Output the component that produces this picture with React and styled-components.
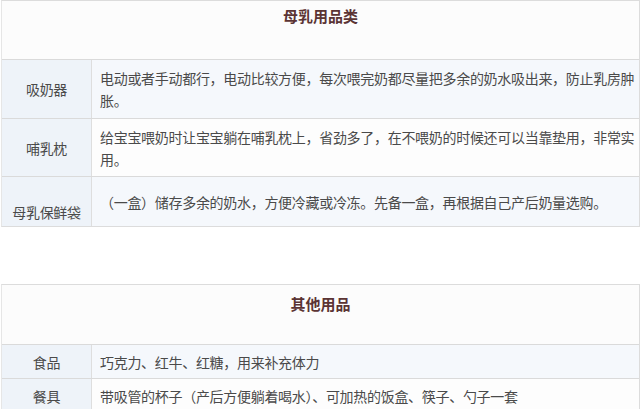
import React from 'react';
import styled, { createGlobalStyle } from 'styled-components';

const GlobalStyle = createGlobalStyle`
  body {
    margin: 0;
    background: #ffffff;
    font-family: "Noto Sans CJK SC", "Noto Sans", sans-serif;
  }
`;

export const Page = styled.div`
  width: 640px;
  height: 409px;
  overflow: hidden;
  display: flex;
  flex-direction: column;
  gap: 57px;
`;

export const Table = styled.div`
  margin-left: 1px;
  width: 639px;
  box-sizing: border-box;
  border: 1px solid #dcdcdc;
  border-left-color: #e6e6e6;
`;

export const Header = styled.div`
  height: ${p => p.h}px;
  box-sizing: border-box;
  padding-top: ${p => p.pt}px;
  background: #fcfcfc;
  text-align: center;
  font-size: 15px;
  line-height: 22px;
  font-weight: bold;
  color: #5b3434;
`;

export const Row = styled.div`
  display: grid;
  grid-template-columns: 90px 1fr;
  height: ${p => p.h}px;
  box-sizing: border-box;
  border-top: 1px solid #dadada;
`;

export const Label = styled.div`
  display: flex;
  align-items: center;
  justify-content: center;
  padding-top: ${p => p.drop || 0}px;
  background: #eef3f9;
  border-right: 1px solid #dedede;
  font-size: 14px;
  letter-spacing: -0.3px;
  line-height: 22px;
  color: #4a4a4a;
`;

export const Cell = styled.div`
  display: flex;
  align-items: center;
  padding: 0 2px 0 8px;
  background: ${p => (p.alt ? '#f5f8fc' : '#fdfdfd')};
  font-size: 14px;
  letter-spacing: -0.3px;
  line-height: 22px;
  color: #4a4a4a;
`;

const feeding = [
  { name: '吸奶器', h: 59, text: '电动或者手动都行，电动比较方便，每次喂完奶都尽量把多余的奶水吸出来，防止乳房肿胀。' },
  { name: '哺乳枕', h: 58, text: '给宝宝喂奶时让宝宝躺在哺乳枕上，省劲多了，在不喂奶的时候还可以当靠垫用，非常实用。' },
  { name: '母乳保鲜袋', h: 50, drop: 20, text: '（一盒）储存多余的奶水，方便冷藏或冷冻。先备一盒，再根据自己产后奶量选购。' },
];

const others = [
  { name: '食品', h: 34, text: '巧克力、红牛、红糖，用来补充体力' },
  { name: '餐具', h: 34, text: '带吸管的杯子（产后方便躺着喝水）、可加热的饭盒、筷子、勺子一套' },
];

function Section({ title, headH, headPt, rows }) {
  return (
    <Table>
      <Header h={headH} pt={headPt}>{title}</Header>
      {rows.map((r, i) => (
        <Row key={r.name} h={r.h}>
          <Label drop={r.drop}>{r.name}</Label>
          <Cell alt={i % 2 === 0}>{r.text}</Cell>
        </Row>
      ))}
    </Table>
  );
}

export default function App() {
  return (
    <>
      <GlobalStyle />
      <Page>
        <Section title="母乳用品类" headH={58} headPt={4} rows={feeding} />
        <Section title="其他用品" headH={59} headPt={8} rows={others} />
      </Page>
    </>
  );
}
